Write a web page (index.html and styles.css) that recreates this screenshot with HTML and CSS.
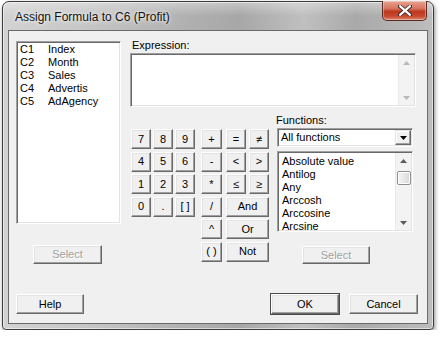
FILE: index.html
```html
<!DOCTYPE html>
<html>
<head>
<meta charset="utf-8">
<link rel="stylesheet" href="styles.css">
</head>
<body>
<div class="window">
  <div class="titlebar">
    <span class="title">Assign Formula to C6 (Profit)</span>
  </div>
  <div class="close">
    <svg width="14" height="11" viewBox="0 0 14 11"><path d="M1.5 1 L12.5 10 M12.5 1 L1.5 10" stroke="#3b2a28" stroke-width="4" stroke-linecap="round"/><path d="M2 1.2 L12 9.8 M12 1.2 L2 9.8" stroke="#fff" stroke-width="2.2" stroke-linecap="round"/></svg>
  </div>
  <div class="client">
    <div class="top">
      <div class="left">
        <div class="listbox cols">
          <div class="row"><span class="cn">C1</span><span>Index</span></div>
          <div class="row"><span class="cn">C2</span><span>Month</span></div>
          <div class="row"><span class="cn">C3</span><span>Sales</span></div>
          <div class="row"><span class="cn">C4</span><span>Advertis</span></div>
          <div class="row"><span class="cn">C5</span><span>AdAgency</span></div>
        </div>
        <div class="btn disabled sel-left">Select</div>
      </div>
      <div class="right">
        <div class="label">Expression:</div>
        <div class="textarea">
          <div class="textbody"></div>
          <div class="vscroll">
            <svg width="7" height="4" viewBox="0 0 7 4"><path d="M0 4 L3.5 0 L7 4 Z" fill="#b8b8b8"/></svg>
            <svg width="7" height="4" viewBox="0 0 7 4"><path d="M0 0 L7 0 L3.5 4 Z" fill="#b8b8b8"/></svg>
          </div>
        </div>
        <div class="lower">
          <div class="keypad">
            <div class="btn k c1">7</div><div class="btn k c2">8</div><div class="btn k c3">9</div>
            <div class="btn k c4">+</div><div class="btn k c5">=</div><div class="btn k c6">≠</div>
            <div class="btn k c1">4</div><div class="btn k c2">5</div><div class="btn k c3">6</div>
            <div class="btn k c4">-</div><div class="btn k c5">&lt;</div><div class="btn k c6">&gt;</div>
            <div class="btn k c1">1</div><div class="btn k c2">2</div><div class="btn k c3">3</div>
            <div class="btn k c4">*</div><div class="btn k c5">≤</div><div class="btn k c6">≥</div>
            <div class="btn k c1">0</div><div class="btn k c2">.</div><div class="btn k c3">[ ]</div>
            <div class="btn k c4">/</div><div class="btn k wide">And</div>
            <div class="btn k c4">^</div><div class="btn k wide">Or</div>
            <div class="btn k c4">( )</div><div class="btn k wide">Not</div>
          </div>
          <div class="funcs">
            <div class="label flabel">Functions:</div>
            <div class="combo">
              <span class="combotext">All functions</span>
              <span class="dropbtn"><svg width="7" height="4" viewBox="0 0 7 4"><path d="M0 0 L7 0 L3.5 4 Z" fill="#000"/></svg></span>
            </div>
            <div class="listbox flist">
              <div class="items">
                <div>Absolute value</div>
                <div>Antilog</div>
                <div>Any</div>
                <div>Arccosh</div>
                <div>Arccosine</div>
                <div>Arcsine</div>
              </div>
              <div class="vscroll active">
                <svg width="7" height="4" viewBox="0 0 7 4"><path d="M0 4 L3.5 0 L7 4 Z" fill="#5a5a5a"/></svg>
                <div class="thumb"></div>
                <div class="spacer"></div>
                <svg width="7" height="4" viewBox="0 0 7 4"><path d="M0 0 L7 0 L3.5 4 Z" fill="#5a5a5a"/></svg>
              </div>
            </div>
            <div class="btn disabled sel-right">Select</div>
          </div>
        </div>
      </div>
    </div>
    <div class="bottom">
      <div class="btn big">Help</div>
      <div class="btn big ok">OK</div>
      <div class="btn big cancel">Cancel</div>
    </div>
  </div>
</div>
</body>
</html>
```

FILE: styles.css
```css
html, body {
  margin: 0;
  padding: 0;
  background: #ffffff;
}
body {
  font-family: "Liberation Sans", Arial, sans-serif;
  font-size: 11px;
  color: #000;
}
.window {
  position: relative;
  box-sizing: border-box;
  margin: 1px 0 0 2px;
  width: 432px;
  height: 329px;
  border: 1px solid #3c3c3c;
  border-radius: 7px 7px 4px 4px;
  padding: 0 5px 5px 5px;
  background:
    linear-gradient(180deg, rgba(255,255,255,0.35) 0px, rgba(255,255,255,0) 14px),
    linear-gradient(90deg, #d2d2d2 0%, #c7c7c7 18%, #b4b4b4 38%, #a7a7a7 55%, #c0c0c0 70%, #a9a9a9 82%, #bdbdbd 100%);
  box-shadow: 1px 2px 4px rgba(0,0,0,0.45), inset 0 0 0 1px rgba(255,255,255,0.55);
  display: flex;
  flex-direction: column;
}
.titlebar {
  height: 28px;
  padding-left: 7px;
  display: flex;
  align-items: flex-start;
}
.title {
  font-size: 12px;
  line-height: 15px;
  padding-top: 8px;
  color: #111;
  text-shadow: 0 0 6px rgba(255,255,255,0.9), 0 0 3px rgba(255,255,255,0.9);
}
.close {
  position: absolute;
  top: -1px;
  right: 6px;
  width: 45px;
  height: 20px;
  box-sizing: border-box;
  border: 1px solid #5a2a22;
  border-top: none;
  border-radius: 0 0 5px 5px;
  background: linear-gradient(180deg, #e8a493 0%, #d6745f 40%, #c0381f 55%, #c8492f 80%, #de8670 100%);
  box-shadow: inset 0 0 0 1px rgba(255,255,255,0.35);
  display: flex;
  align-items: center;
  justify-content: center;
}
.client {
  flex: 1;
  box-sizing: border-box;
  border: 1px solid #6a6a6a;
  background: #f0f0f0;
  display: flex;
  flex-direction: column;
}
.top {
  display: flex;
  padding-left: 7px;
}
.left {
  width: 105px;
  margin-top: 10px;
  display: flex;
  flex-direction: column;
}
.listbox {
  box-sizing: border-box;
  background: #fff;
  border-top: 1px solid #a0a0a0;
  border-left: 1px solid #a0a0a0;
  border-right: 1px solid #fff;
  border-bottom: 1px solid #fff;
  box-shadow: inset 1px 1px 0 #696969, inset -1px -1px 0 #e3e3e3;
}
.cols {
  height: 183px;
  padding: 1px 0 0 3px;
}
.row {
  display: flex;
  line-height: 13px;
  height: 13px;
}
.cn {
  width: 28px;
}
.btn {
  box-sizing: border-box;
  background: #f0f0f0;
  border-top: 1px solid #fff;
  border-left: 1px solid #fff;
  border-right: 1px solid #696969;
  border-bottom: 1px solid #696969;
  box-shadow: inset -1px -1px 0 #a0a0a0, inset 1px 1px 0 #e3e3e3;
  display: flex;
  align-items: center;
  justify-content: center;
  line-height: 13px;
}
.disabled {
  color: #a0a0a0;
  text-shadow: 1px 1px 0 #fff;
}
.sel-left {
  margin: 21px 0 0 17px;
  width: 69px;
  height: 19px;
}
.right {
  margin-left: 9px;
  padding-top: 8px;
  display: flex;
  flex-direction: column;
}
.label {
  line-height: 13px;
  height: 13px;
  margin-bottom: 1px;
  padding-left: 2px;
}
.flabel {
  padding-left: 0;
  margin-left: -1px;
}
.textarea {
  box-sizing: border-box;
  width: 286px;
  height: 54px;
  background: #fff;
  border-top: 1px solid #a0a0a0;
  border-left: 1px solid #a0a0a0;
  border-right: 1px solid #fff;
  border-bottom: 1px solid #fff;
  box-shadow: inset 1px 1px 0 #696969, inset -1px -1px 0 #e3e3e3;
  display: flex;
  padding: 1px 1px 1px 1px;
}
.textbody {
  flex: 1;
}
.vscroll {
  width: 16px;
  background: #f3f3f3;
  display: flex;
  flex-direction: column;
  align-items: center;
  justify-content: space-between;
  padding: 6px 0 5px;
  box-sizing: border-box;
  border-left: 1px solid #eaeaea;
}
.lower {
  display: flex;
}
.keypad {
  margin: 22px 0 0 1px;
  display: grid;
  grid-template-columns: 20px 2px 20px 2px 20px 6px 21px 4px 20px 3px 20px;
  grid-auto-rows: 20px;
  row-gap: 2.5px;
  align-self: flex-start;
}
.k {
  font-size: 11px;
}
.c1 { grid-column: 1; }
.c2 { grid-column: 3; }
.c3 { grid-column: 5; }
.c4 { grid-column: 7; }
.c5 { grid-column: 9; }
.c6 { grid-column: 11; }
.wide { grid-column: 9 / 12; }
.funcs {
  margin: 7px 0 0 8px;
  width: 136px;
  display: flex;
  flex-direction: column;
}
.combo {
  box-sizing: border-box;
  height: 19px;
  background: #fff;
  border-top: 1px solid #a0a0a0;
  border-left: 1px solid #a0a0a0;
  border-right: 1px solid #fff;
  border-bottom: 1px solid #fff;
  box-shadow: inset 1px 1px 0 #696969, inset -1px -1px 0 #e3e3e3;
  display: flex;
  align-items: stretch;
  padding: 1px;
  margin-bottom: 4px;
}
.combotext {
  flex: 1;
  padding-left: 2px;
  line-height: 15px;
}
.dropbtn {
  width: 16px;
  box-sizing: border-box;
  background: #f0f0f0;
  border-top: 1px solid #e3e3e3;
  border-left: 1px solid #e3e3e3;
  border-right: 1px solid #696969;
  border-bottom: 1px solid #696969;
  box-shadow: inset -1px -1px 0 #a0a0a0, inset 1px 1px 0 #fff;
  display: flex;
  align-items: center;
  justify-content: center;
}
.flist {
  height: 81px;
  display: flex;
  padding: 1px;
}
.items {
  flex: 1;
  padding: 2px 0 0 3px;
}
.items div {
  line-height: 13px;
  height: 13px;
  white-space: nowrap;
}
.vscroll.active {
  padding: 6px 0 5px;
  justify-content: flex-start;
}
.thumb {
  margin-top: 8px;
  width: 14px;
  height: 14px;
  box-sizing: border-box;
  border: 1px solid #8e8f8f;
  border-radius: 2px;
  background: linear-gradient(90deg, #f3f3f3 0%, #e8e8e8 50%, #d6d6d6 100%);
  box-shadow: inset 0 0 0 1px #fff;
}
.spacer {
  flex: 1;
}
.sel-right {
  margin: 14px 0 0 25px;
  width: 68px;
  height: 18px;
}
.bottom {
  margin-top: auto;
  display: flex;
  padding: 0 0 9px 7px;
}
.big {
  width: 68px;
  height: 20px;
}
.ok {
  margin-left: 187px;
  outline: 1px solid #4a4a4a;
}
.cancel {
  margin-left: 10px;
  width: 69px;
}
```
